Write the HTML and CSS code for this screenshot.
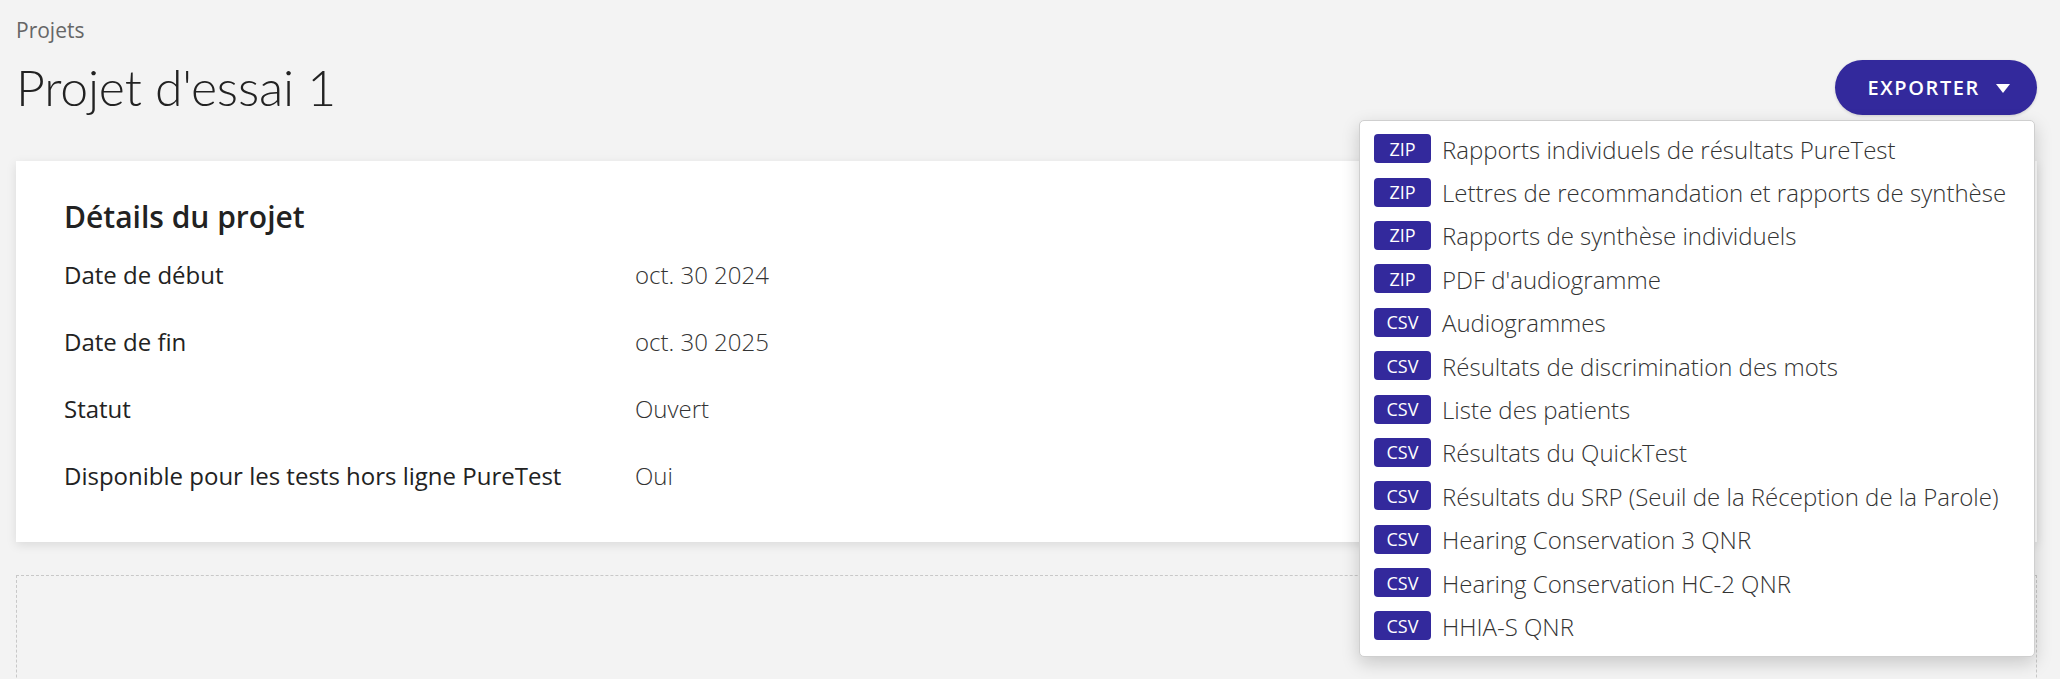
FILE: index.html
```html
<!DOCTYPE html>
<html lang="fr">
<head>
<meta charset="utf-8">
<title>Projet d'essai 1</title>
<link rel="stylesheet" href="styles.css">
</head>
<body>
<div class="page">
  <div class="breadcrumb">Projets</div>
  <div class="header">
    <h1 class="title">Projet d'essai 1</h1>
    <div class="export">
      <button class="export-btn">EXPORTER <span class="caret"></span></button>
      <ul class="menu">
        <li class="menu-item"><span class="badge">ZIP</span><span class="item-text">Rapports individuels de résultats PureTest</span></li>
        <li class="menu-item"><span class="badge">ZIP</span><span class="item-text">Lettres de recommandation et rapports de synthèse</span></li>
        <li class="menu-item"><span class="badge">ZIP</span><span class="item-text">Rapports de synthèse individuels</span></li>
        <li class="menu-item"><span class="badge">ZIP</span><span class="item-text">PDF d'audiogramme</span></li>
        <li class="menu-item"><span class="badge">CSV</span><span class="item-text">Audiogrammes</span></li>
        <li class="menu-item"><span class="badge">CSV</span><span class="item-text">Résultats de discrimination des mots</span></li>
        <li class="menu-item"><span class="badge">CSV</span><span class="item-text">Liste des patients</span></li>
        <li class="menu-item"><span class="badge">CSV</span><span class="item-text">Résultats du QuickTest</span></li>
        <li class="menu-item"><span class="badge">CSV</span><span class="item-text">Résultats du SRP (Seuil de la Réception de la Parole)</span></li>
        <li class="menu-item"><span class="badge">CSV</span><span class="item-text">Hearing Conservation 3 QNR</span></li>
        <li class="menu-item"><span class="badge">CSV</span><span class="item-text">Hearing Conservation HC-2 QNR</span></li>
        <li class="menu-item"><span class="badge">CSV</span><span class="item-text">HHIA-S QNR</span></li>
      </ul>
    </div>
  </div>
  <section class="card">
    <h2 class="card-title">Détails du projet</h2>
    <div class="details">
      <div class="label">Date de début</div><div class="value">oct. 30 2024</div>
      <div class="label">Date de fin</div><div class="value">oct. 30 2025</div>
      <div class="label">Statut</div><div class="value">Ouvert</div>
      <div class="label">Disponible pour les tests hors ligne PureTest</div><div class="value">Oui</div>
    </div>
  </section>
  <div class="dropzone"></div>
</div>
</body>
</html>
```

FILE: styles.css
```css
html, body {
  margin: 0;
  padding: 0;
  background: #f3f3f3;
  overflow: hidden;
}
body {
  font-family: "Open Sans", "Liberation Sans", sans-serif;
  color: #222;
}
.page {
  padding: 16px 23px 0 16px;
}
.breadcrumb {
  font-size: 21px;
  line-height: 28px;
  color: #666;
  margin-bottom: 16px;
}
.header {
  display: flex;
  align-items: center;
  justify-content: space-between;
  height: 55px;
}
.title {
  margin: 0;
  font-family: "Lato", "Open Sans", sans-serif;
  font-weight: 300;
  font-size: 50px;
  line-height: 55px;
  color: #222;
  letter-spacing: -0.2px;
}
.export {
  position: relative;
}
.export-btn {
  display: flex;
  align-items: center;
  gap: 16px;
  height: 55px;
  padding: 0 27px 0 33px;
  border: none;
  border-radius: 28px;
  background: #33299c;
  color: #fff;
  font-family: "Open Sans", sans-serif;
  font-weight: 600;
  font-size: 20px;
  letter-spacing: 1.6px;
  box-shadow: 0 1px 3px rgba(0,0,0,0.15);
}
.caret {
  width: 0;
  height: 0;
  border-left: 7px solid transparent;
  border-right: 7px solid transparent;
  border-top: 9px solid #fff;
  margin-top: 2px;
}
.menu {
  position: absolute;
  z-index: 10;
  top: calc(100% + 5px);
  right: 2px;
  width: 676px;
  box-sizing: border-box;
  margin: 0;
  list-style: none;
  padding: 6px 20px 8px 14px;
  background: #fff;
  border: 1px solid #cfcfcf;
  border-radius: 5px;
  box-shadow: 0 6px 18px rgba(0,0,0,0.18);
}
.menu-item {
  display: flex;
  align-items: center;
  gap: 11px;
  height: 43.4px;
}
.badge {
  display: flex;
  align-items: center;
  justify-content: center;
  flex: none;
  width: 57px;
  height: 29px;
  border-radius: 4px;
  background: #33299c;
  color: #fff;
  font-size: 18px;
  line-height: 1;
}
.item-text {
  font-size: 24px;
  line-height: 30px;
  font-weight: 300;
  color: #333;
  white-space: nowrap;
  margin-top: 2px;
}
.card {
  margin-top: 46px;
  background: #fff;
  padding: 36px 48px 33px 48px;
  box-shadow: 0 3px 10px rgba(0,0,0,0.1);
}
.card-title {
  margin: 0 0 4px 0;
  font-size: 30px;
  line-height: 40px;
  font-weight: 600;
  color: #222;
}
.details {
  display: grid;
  grid-template-columns: 571px 1fr;
  grid-auto-rows: 67px;
  align-items: center;
}
.label {
  font-size: 24px;
  line-height: 32px;
  color: #222;
}
.value {
  font-size: 24px;
  line-height: 32px;
  font-weight: 300;
  color: #333;
}
.dropzone {
  margin-top: 33px;
  height: 200px;
  border: 1px dashed #c8c8c8;
}
```
